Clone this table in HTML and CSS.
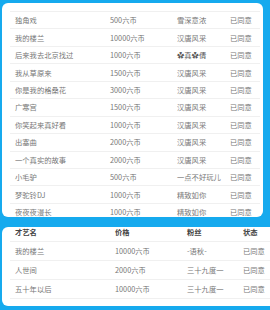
FILE: index.html
```html
<!DOCTYPE html>
<html lang="zh">
<head>
<meta charset="utf-8">
<link rel="stylesheet" href="styles.css">
</head>
<body>
<div class="page">
  <div class="card card-top">
    <div class="table t1">
      <div class="row"><span>独角戏</span><span>500六币</span><span>雪深意浓</span><span>已同意</span></div>
      <div class="row"><span>我的楼兰</span><span>10000六币</span><span>汉唐风采</span><span>已同意</span></div>
      <div class="row"><span>后来我去北京找过</span><span>1000六币</span><span class="b">✿真✿倩</span><span>已同意</span></div>
      <div class="row"><span>我从草原来</span><span>1500六币</span><span>汉唐风采</span><span>已同意</span></div>
      <div class="row"><span>你是我的格桑花</span><span>3000六币</span><span>汉唐风采</span><span>已同意</span></div>
      <div class="row"><span>广寒宫</span><span>1500六币</span><span>汉唐风采</span><span>已同意</span></div>
      <div class="row"><span>你笑起来真好看</span><span>1000六币</span><span>汉唐风采</span><span>已同意</span></div>
      <div class="row"><span>出塞曲</span><span>2000六币</span><span>汉唐风采</span><span>已同意</span></div>
      <div class="row"><span>一个真实的故事</span><span>2000六币</span><span>汉唐风采</span><span>已同意</span></div>
      <div class="row"><span>小毛驴</span><span>500六币</span><span>一点不好玩儿</span><span>已同意</span></div>
      <div class="row"><span>梦驼铃DJ</span><span>1000六币</span><span>精致如你</span><span>已同意</span></div>
      <div class="row"><span>夜夜夜漫长</span><span>1000六币</span><span>精致如你</span><span>已同意</span></div>
    </div>
  </div>
  <div class="card card-bottom">
    <div class="table t2">
      <div class="row head"><span>才艺名</span><span>价格</span><span>粉丝</span><span>状态</span></div>
      <div class="row"><span>我的楼兰</span><span>10000六币</span><span>-语秋-</span><span>已同意</span></div>
      <div class="row"><span>人世间</span><span>2000六币</span><span>三十九度一</span><span>已同意</span></div>
      <div class="row"><span>五十年以后</span><span>10000六币</span><span>三十九度一</span><span>已同意</span></div>
    </div>
  </div>
</div>
</body>
</html>
```
FILE: styles.css
```css
html, body {
  margin: 0;
  padding: 0;
  background: #16aaee;
  overflow: hidden;
  width: 270px;
  height: 310px;
}
.page {
  display: flex;
  flex-direction: column;
  gap: 10px;
  padding: 3px 0 0 2px;
  font-family: "Noto Sans CJK SC", "Noto Sans", sans-serif;
  font-size: 7.3px;
  color: #777;
}
.card {
  background: #fff;
  overflow: hidden;
}
.card-top {
  width: 261px;
  height: 214px;
  padding: 8px 3px 0 8px;
  box-sizing: border-box;
  border-radius: 6px;
}
.card-bottom {
  width: 268px;
  height: 79px;
  padding: 0 0 0 8px;
  box-sizing: border-box;
  border-radius: 6px 0 0 6px;
}
.table {
  display: flex;
  flex-direction: column;
}
.row {
  display: grid;
  align-items: center;
  padding-left: 5px;
  box-sizing: border-box;
  white-space: nowrap;
  overflow: hidden;
}
.t1 .row {
  grid-template-columns: 95px 67px 53px 1fr;
  height: 17.45px;
  border-top: 1px solid #f0f0f0;
}
.t2 .row {
  grid-template-columns: 100px 72px 56px 1fr;
  height: 19.3px;
  border-bottom: 1px solid #f0f0f0;
}
.t2 .row.head {
  height: 14.5px;
  padding-bottom: 5px;
  font-weight: bold;
  color: #444;
}
.b {
  color: #555;
}
```
